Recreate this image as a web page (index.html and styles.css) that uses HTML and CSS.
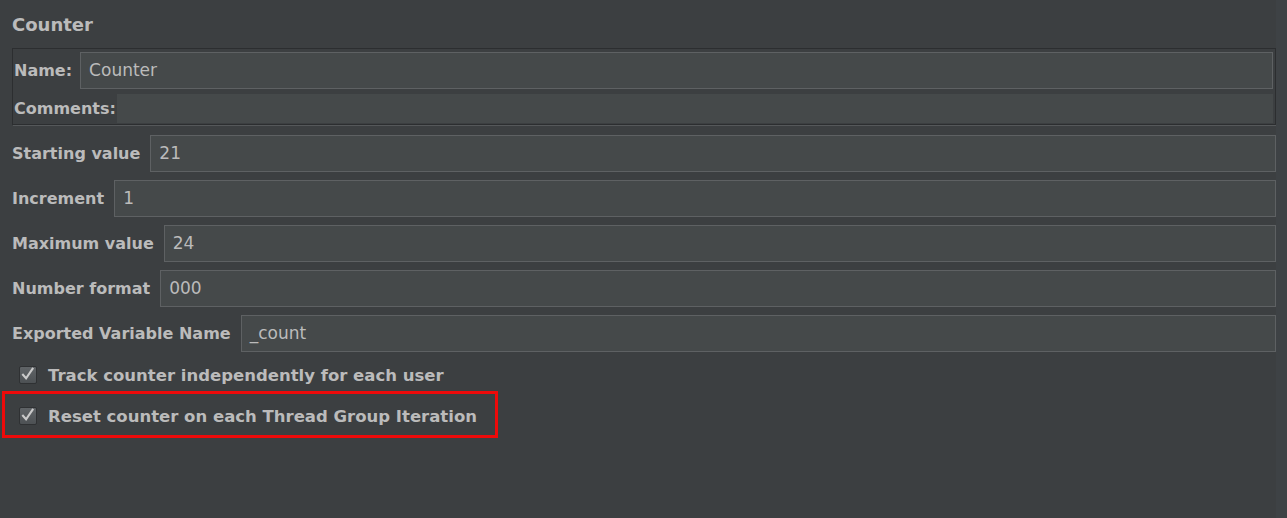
FILE: index.html
```html
<!DOCTYPE html>
<html>
<head>
<meta charset="utf-8">
<link rel="stylesheet" href="styles.css">
</head>
<body>
<div class="page">
  <main class="main">
    <div class="title">Counter</div>
    <div class="namepanel">
      <div class="name-row">
        <span class="label">Name:</span>
        <div class="field name-field">Counter</div>
      </div>
      <div class="comments-row">
        <span class="label">Comments:</span>
        <div class="comments-area"></div>
      </div>
    </div>
    <div class="rows">
      <div class="row"><span class="label">Starting value</span><div class="field">21</div></div>
      <div class="row"><span class="label">Increment</span><div class="field">1</div></div>
      <div class="row"><span class="label">Maximum value</span><div class="field">24</div></div>
      <div class="row"><span class="label">Number format</span><div class="field">000</div></div>
      <div class="row"><span class="label">Exported Variable Name</span><div class="field">_count</div></div>
    </div>
    <div class="check check-first">
      <span class="box"><svg width="18" height="18" viewBox="0 0 18 18"><path d="M3.5 9 L7.5 13.5 L15 2.5" fill="none" stroke="#cacaca" stroke-width="2.2"/></svg></span>
      <span class="check-label">Track counter independently for each user</span>
    </div>
    <div class="highlight">
      <div class="check">
        <span class="box"><svg width="18" height="18" viewBox="0 0 18 18"><path d="M3.5 9 L7.5 13.5 L15 2.5" fill="none" stroke="#cacaca" stroke-width="2.2"/></svg></span>
        <span class="check-label">Reset counter on each Thread Group Iteration</span>
      </div>
    </div>
  </main>
  <div class="strip"></div>
</div>
</body>
</html>
```

FILE: styles.css
```css
html, body {
  margin: 0;
  padding: 0;
  background: #3c3f41;
}
body {
  width: 1287px;
  height: 518px;
  overflow: hidden;
  font-family: "DejaVu Sans", "Liberation Sans", sans-serif;
  color: #bbbbbb;
}
.page {
  display: flex;
  height: 518px;
}
.main {
  flex: 1;
  padding-left: 12px;
  box-sizing: border-box;
}
.strip {
  width: 11px;
  background: #3e4245;
}
.title {
  font-weight: bold;
  font-size: 18px;
  line-height: 24px;
  padding-top: 13px;
  height: 48px;
  box-sizing: border-box;
}
.namepanel {
  border: 1px solid #2c2e30;
  box-shadow: 1px 1px 0 #55585a;
  padding: 3px 2px 0 1px;
  height: 77px;
  box-sizing: border-box;
}
.label {
  font-weight: bold;
  font-size: 16px;
  white-space: nowrap;
}
.name-row {
  display: flex;
  align-items: center;
  gap: 8px;
}
.field {
  flex: 1;
  height: 37px;
  box-sizing: border-box;
  background: #45494a;
  border: 1px solid #5e6163;
  font-size: 17px;
  line-height: 35px;
  padding-left: 8px;
  white-space: nowrap;
}
.comments-row {
  display: flex;
  align-items: center;
  gap: 1px;
  margin-top: 5px;
  height: 29px;
}
.comments-area {
  flex: 1;
  height: 29px;
  background: #45494a;
}
.rows {
  margin-top: 10px;
  display: flex;
  flex-direction: column;
  gap: 8px;
}
.row {
  display: flex;
  align-items: center;
  gap: 10px;
}
.check {
  display: flex;
  align-items: center;
  gap: 11px;
  height: 24px;
}
.check-first {
  margin-top: 11px;
  padding-left: 7px;
}
.box {
  width: 18px;
  height: 18px;
  box-sizing: border-box;
  border: 1px solid #2f3133;
  background: linear-gradient(#606467, #4d5154);
  border-radius: 2px;
  display: flex;
}
.box svg {
  margin: -2px 0 0 -1px;
}
.check-label {
  font-weight: bold;
  font-size: 16.5px;
  white-space: nowrap;
}
.highlight {
  margin-top: 4px;
  margin-left: -10px;
  width: 496px;
  height: 47px;
  box-sizing: border-box;
  border: 3px solid #ee0a0a;
  padding: 10px 0 0 14px;
}
```
